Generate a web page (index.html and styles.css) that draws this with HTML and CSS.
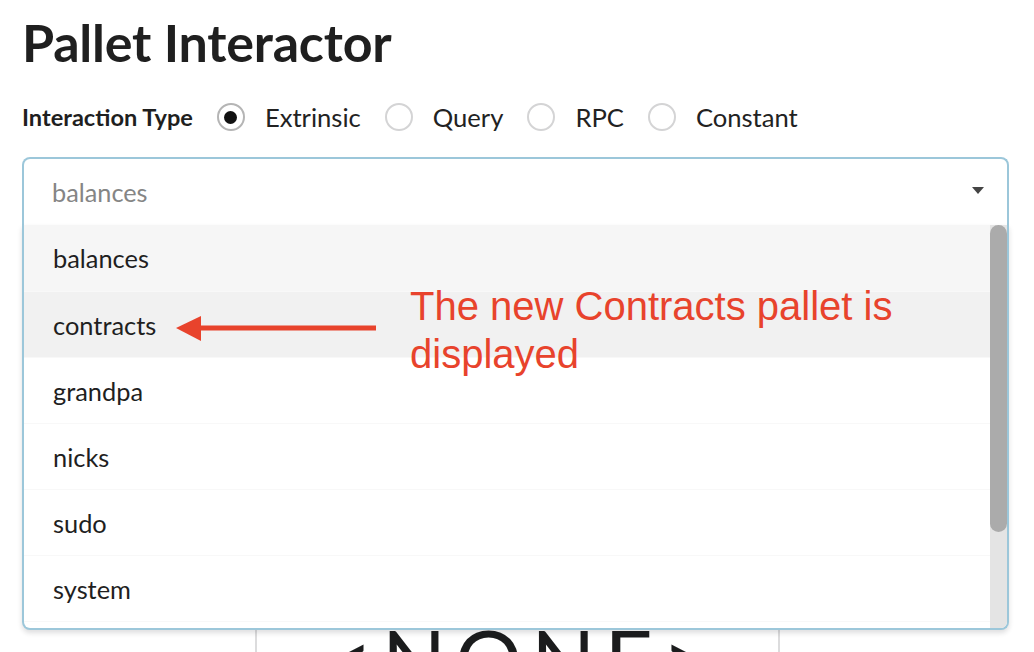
FILE: index.html
```html
<!DOCTYPE html>
<html>
<head>
<meta charset="utf-8">
<link rel="stylesheet" href="styles.css">
</head>
<body>
<div class="page">
  <h1 class="title">Pallet Interactor</h1>
  <div class="type-row">
    <span class="type-label">Interaction Type</span>
    <label class="radio checked"><span class="circle"></span><span class="radio-text">Extrinsic</span></label>
    <label class="radio"><span class="circle"></span><span class="radio-text">Query</span></label>
    <label class="radio"><span class="circle"></span><span class="radio-text">RPC</span></label>
    <label class="radio"><span class="circle"></span><span class="radio-text">Constant</span></label>
  </div>
  <div class="dropdown">
    <span class="dd-text">balances</span>
    <span class="caret"></span>
    <div class="menu">
      <div class="menu-list">
        <div class="item selected">balances</div>
        <div class="item hovered">contracts</div>
        <div class="item">grandpa</div>
        <div class="item">nicks</div>
        <div class="item">sudo</div>
        <div class="item">system</div>
        <div class="item">templateModule</div>
        <div class="item">timestamp</div>
      </div>
      <div class="scrollbar"><div class="thumb"></div></div>
    </div>
  </div>
  <div class="preview"><span class="preview-text">&lt;NONE&gt;</span></div>

  <svg class="arrow" width="212" height="40" viewBox="0 0 212 40">
    <line x1="26" y1="18" x2="205" y2="18" stroke="#e8432c" stroke-width="5"/>
    <polygon points="5,18 30,6 30,31" fill="#e8432c"/>
  </svg>
  <div class="annotation">The new Contracts pallet is<br>displayed</div>
</div>
</body>
</html>
```

FILE: styles.css
```css
html, body {
  margin: 0;
  padding: 0;
  background: #ffffff;
  overflow: hidden;
}

.page {
  position: relative;
  padding: 11px 25px 0 22px;
  font-family: Lato, "Open Sans", sans-serif;
  color: #1b1c1d;
}

.title {
  margin: 0;
  font-size: 52px;
  line-height: 1.2;
  font-weight: 700;
  color: #1f1f1f;
  letter-spacing: -0.2px;
}

.type-row {
  display: flex;
  align-items: center;
  height: 30px;
  margin-top: 29px;
}

.type-label {
  font-size: 23.6px;
  font-weight: 700;
  color: #1f1f1f;
  margin-right: 24px;
}

.radio {
  display: flex;
  align-items: center;
  margin-right: 24px;
}

.circle {
  box-sizing: border-box;
  width: 28px;
  height: 28px;
  border: 2px solid #d4d4d5;
  border-radius: 50%;
  margin-right: 20px;
  position: relative;
}

.radio.checked .circle {
  border-color: #b5b5b5;
}

.radio.checked .circle::after {
  content: "";
  position: absolute;
  left: 50%;
  top: 50%;
  width: 13px;
  height: 13px;
  margin: -6.5px 0 0 -6.5px;
  border-radius: 50%;
  background: #111;
}

.radio-text {
  font-size: 25.6px;
  color: #222;
}

.dropdown {
  position: relative;
  box-sizing: border-box;
  width: 987px;
  height: 68px;
  margin-top: 25px;
  border: 2px solid #9cc7da;
  border-bottom: none;
  border-radius: 8px 8px 0 0;
  display: flex;
  align-items: center;
  justify-content: space-between;
  padding: 0 23px 0 28px;
}

.dd-text {
  font-size: 25.3px;
  color: #858585;
}

.caret {
  width: 0;
  height: 0;
  border-left: 6.5px solid transparent;
  border-right: 6.5px solid transparent;
  border-top: 7px solid #444;
  margin-bottom: 4px;
}

.menu {
  position: absolute;
  top: 100%;
  left: -2px;
  right: -2px;
  height: 403px;
  border: 2px solid #9cc7da;
  border-top: none;
  border-radius: 0 0 8px 8px;
  background: #fff;
  display: flex;
  overflow: hidden;
  box-shadow: 0 3px 5px 0 rgba(34, 36, 38, 0.15);
  z-index: 2;
}

.menu-list {
  flex: 1;
  overflow: hidden;
}

.item {
  box-sizing: border-box;
  height: 66px;
  display: flex;
  align-items: center;
  padding-left: 29px;
  font-size: 25.4px;
  color: #1f1f1f;
  border-top: 1px solid #f8f8f8;
}

.item:first-child {
  border-top: none;
}

.item.selected {
  background: #f6f6f6;
}

.item.hovered {
  background: #f1f1f1;
}

.scrollbar {
  width: 17px;
  background: #e4e4e4;
  flex: none;
}

.thumb {
  height: 307px;
  background: #ababab;
  border-radius: 9px;
}

.preview {
  box-sizing: border-box;
  width: 525px;
  height: 500px;
  margin: 20px 0 0 233px;
  border: 2px solid #dcdcdd;
  text-align: center;
  padding-top: 370px;
}

.preview-text {
  font-size: 84px;
  line-height: 84px;
  letter-spacing: 9px;
  margin-right: -9px;
  color: #1b1c1d;
}

.arrow {
  position: absolute;
  left: 171px;
  top: 310px;
  z-index: 3;
}

.annotation {
  position: absolute;
  left: 410px;
  top: 282px;
  font-family: "Liberation Sans", Arial, sans-serif;
  font-size: 40px;
  line-height: 48px;
  color: #e8432c;
  z-index: 3;
}
```
